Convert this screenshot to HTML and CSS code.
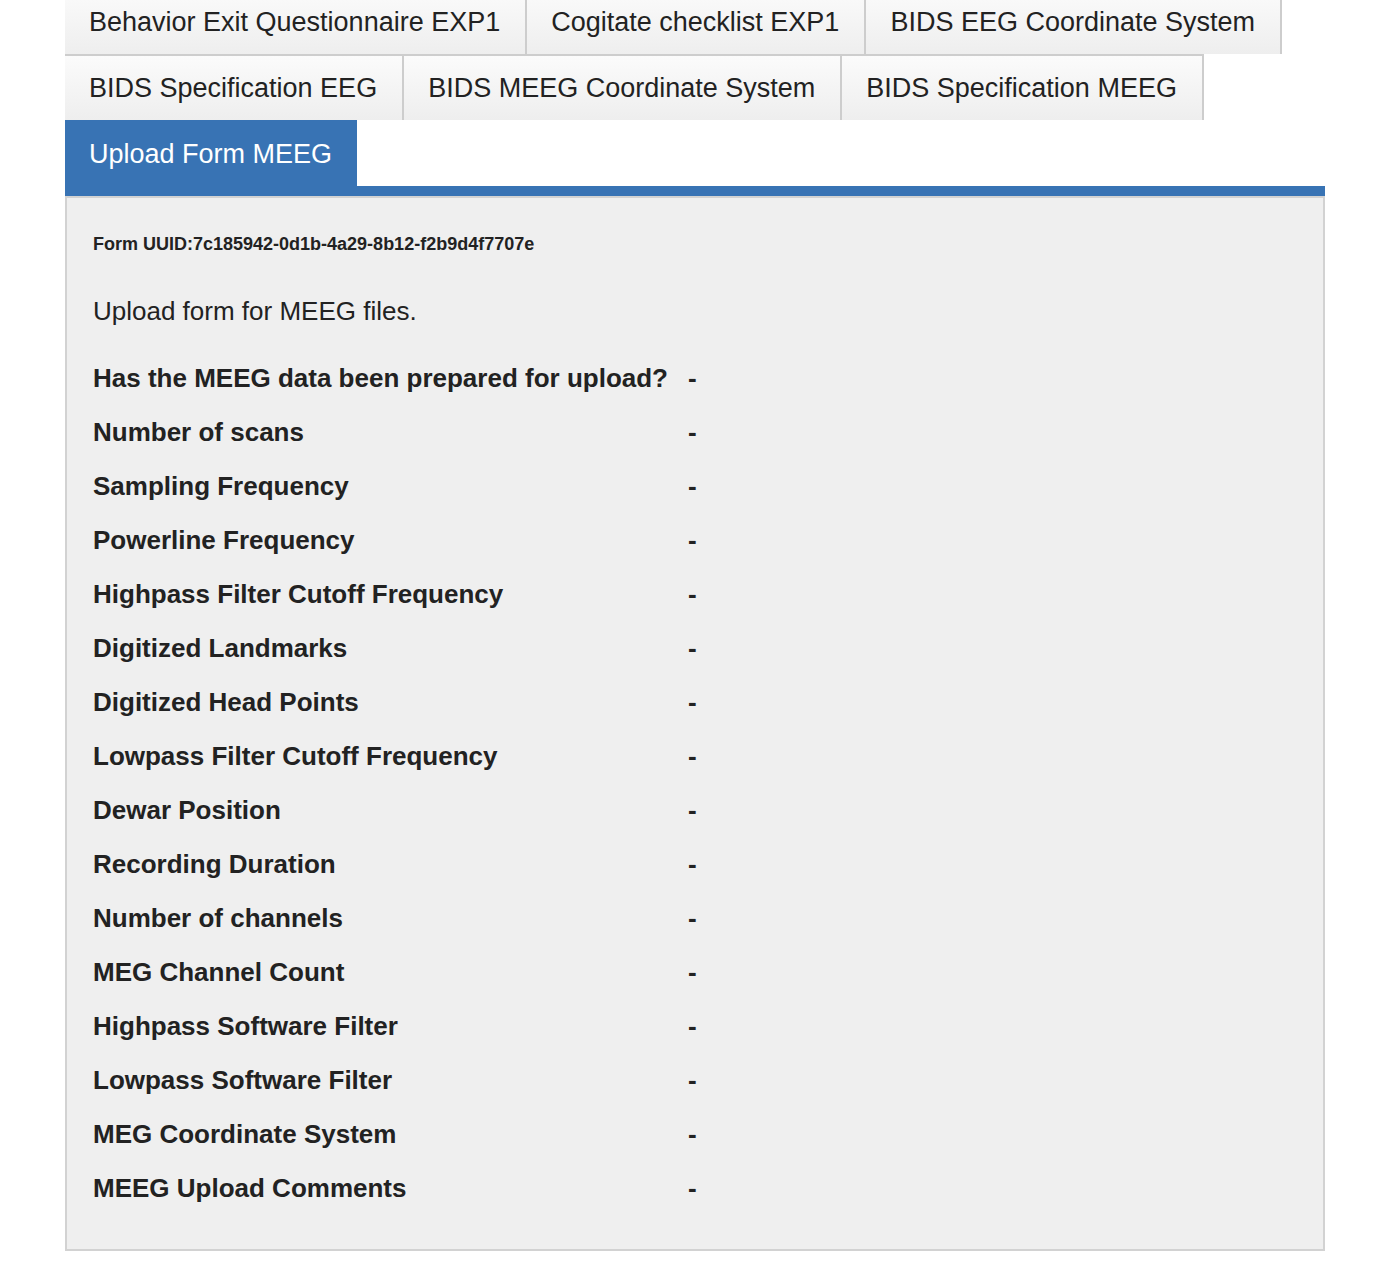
FILE: index.html
```html
<!DOCTYPE html>
<html lang="en">
<head>
<meta charset="utf-8">
<title>Upload Form MEEG</title>
<link rel="stylesheet" href="styles.css">
</head>
<body>
<div class="page">
  <ul class="tabs">
    <li class="tab">Behavior Exit Questionnaire EXP1</li>
    <li class="tab">Cogitate checklist EXP1</li>
    <li class="tab">BIDS EEG Coordinate System</li>
    <li class="tab">BIDS Specification EEG</li>
    <li class="tab">BIDS MEEG Coordinate System</li>
    <li class="tab">BIDS Specification MEEG</li>
    <li class="tab tab-active">Upload Form MEEG</li>
  </ul>
  <div class="panel">
    <div class="uuid">Form UUID:7c185942-0d1b-4a29-8b12-f2b9d4f7707e</div>
    <p class="desc">Upload form for MEEG files.</p>
    <table class="fields">
      <tr><th>Has the MEEG data been prepared for upload?</th><td>-</td></tr>
      <tr><th>Number of scans</th><td>-</td></tr>
      <tr><th>Sampling Frequency</th><td>-</td></tr>
      <tr><th>Powerline Frequency</th><td>-</td></tr>
      <tr><th>Highpass Filter Cutoff Frequency</th><td>-</td></tr>
      <tr><th>Digitized Landmarks</th><td>-</td></tr>
      <tr><th>Digitized Head Points</th><td>-</td></tr>
      <tr><th>Lowpass Filter Cutoff Frequency</th><td>-</td></tr>
      <tr><th>Dewar Position</th><td>-</td></tr>
      <tr><th>Recording Duration</th><td>-</td></tr>
      <tr><th>Number of channels</th><td>-</td></tr>
      <tr><th>MEG Channel Count</th><td>-</td></tr>
      <tr><th>Highpass Software Filter</th><td>-</td></tr>
      <tr><th>Lowpass Software Filter</th><td>-</td></tr>
      <tr><th>MEG Coordinate System</th><td>-</td></tr>
      <tr><th>MEEG Upload Comments</th><td>-</td></tr>
    </table>
  </div>
</div>
</body>
</html>
```

FILE: styles.css
```css
html, body {
  margin: 0;
  padding: 0;
  background: #ffffff;
}

body {
  font-family: "Liberation Sans", Arial, Helvetica, sans-serif;
  color: #222222;
}

.page {
  width: 1260px;
  margin: -12px 0 0 65px;
}

.tabs {
  list-style: none;
  margin: 0;
  padding: 0;
  display: flex;
  flex-wrap: wrap;
  border-bottom: 10px solid #3873b4;
}

.tab {
  font-size: 27px;
  line-height: 64px;
  padding: 0 25px 0 24px;
  color: #222222;
  white-space: nowrap;
  border-top: 2px solid #cdcdcd;
  border-right: 2px solid #cdcdcd;
  background: linear-gradient(to bottom, #fbfbfb 0%, #eeeeee 100%);
}

.tab-active {
  background: #3873b4;
  color: #ffffff;
  border-top-color: #3873b4;
  border-right-color: #3873b4;
  padding-right: 23px;
}

.panel {
  background: #efefef;
  border: 2px solid #d2d2d2;
  padding: 35px 26px 34px 26px;
}

.uuid {
  font-size: 18px;
  font-weight: bold;
  line-height: 22px;
}

.desc {
  margin: 41px 0 25px 0;
  font-size: 26px;
  line-height: 30px;
}

.fields {
  border-collapse: collapse;
}

.fields th,
.fields td {
  padding: 0;
  height: 54px;
  font-size: 26px;
  font-weight: bold;
  text-align: left;
  vertical-align: middle;
}

.fields th {
  padding-right: 20px;
}
```
